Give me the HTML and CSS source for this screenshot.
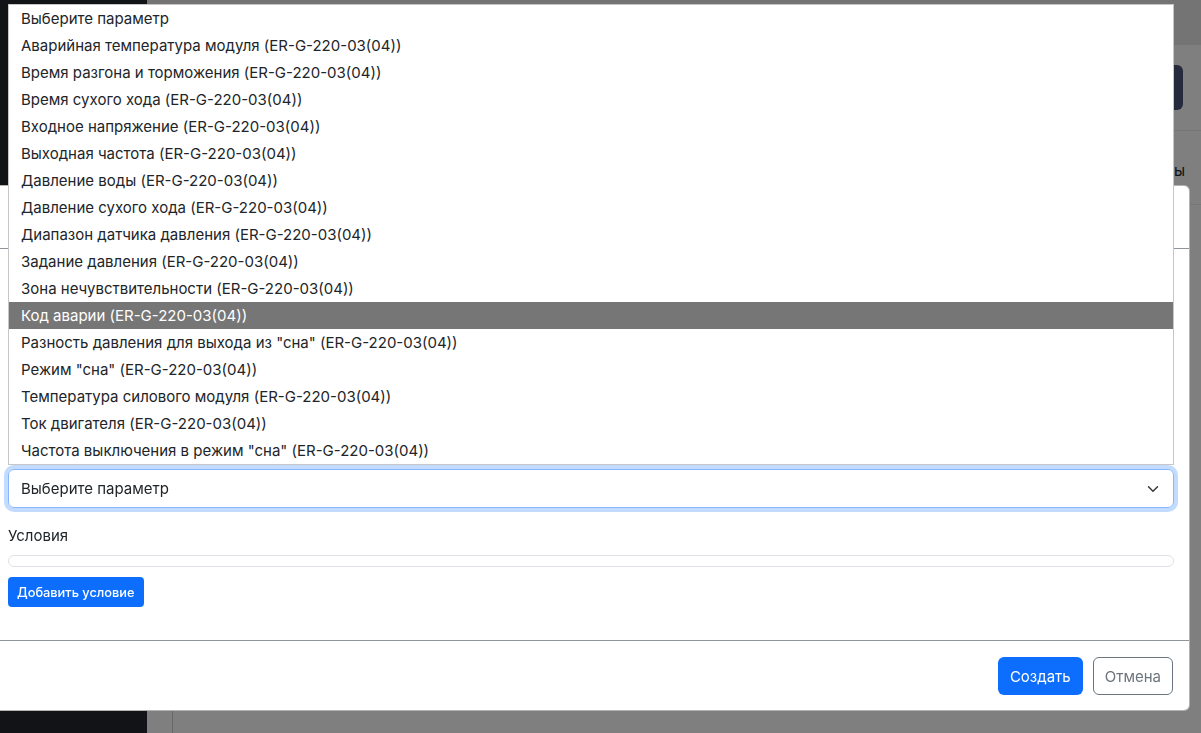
FILE: index.html
```html
<!DOCTYPE html>
<html lang="ru">
<head>
    <meta charset="UTF-8">
    <meta name="viewport" content="width=device-width, initial-scale=1.0">
    <title>Правила - Новое правило</title>
    <link rel="stylesheet" href="styles.css">
</head>
<body>
    <div class="page">
        <aside class="sidebar"></aside>
        <main class="main">
            <header class="topbar"></header>
            <div class="toolbar">
                <div class="btn-dark"></div>
            </div>
            <div class="tabs">
                <span class="tab">ы</span>
            </div>
            <div class="content-panel"></div>
        </main>
    </div>

    <div class="backdrop"></div>

    <div class="modal">
        <div class="modal-header"></div>
        <div class="modal-body">
            <!-- fields hidden under the open select list -->
            <div class="form-group">
                <div class="label-space"></div>
                <div class="form-control"></div>
            </div>
            <div class="form-group">
                <div class="label-space"></div>
                <div class="form-control"></div>
            </div>
            <div class="form-group">
                <div class="label-space"></div>
                <div class="form-select focused">
                    <span>Выберите параметр</span>
                    <svg width="16" height="12" viewBox="0 0 16 16"><path d="m2 5 6 6 6-6" fill="none" stroke="#343a40" stroke-width="2" stroke-linecap="round" stroke-linejoin="round"/></svg>
                </div>
            </div>
            <label class="form-label">Условия</label>
            <div class="conditions"></div>
            <button class="btn btn-primary btn-sm">Добавить условие</button>
        </div>
        <div class="modal-footer">
            <button class="btn btn-primary">Создать</button>
            <button class="btn btn-outline">Отмена</button>
        </div>
    </div>

    <ul class="select-list" id="paramList"></ul>

    <script>
        // Options of the open parameter select
        const params = [
            'Выберите параметр',
            'Аварийная температура модуля',
            'Время разгона и торможения',
            'Время сухого хода',
            'Входное напряжение',
            'Выходная частота',
            'Давление воды',
            'Давление сухого хода',
            'Диапазон датчика давления',
            'Задание давления',
            'Зона нечувствительности',
            'Код аварии',
            'Разность давления для выхода из "сна"',
            'Режим "сна"',
            'Температура силового модуля',
            'Ток двигателя',
            'Частота выключения в режим "сна"'
        ];
        const device = 'ER-G-220-03(04)';
        const selected = 'Код аварии';

        document.getElementById('paramList').innerHTML = params.map((name, i) => {
            const label = i === 0 ? name : `${name} (${device})`;
            const cls = name === selected ? 'option active' : 'option';
            return `<li class="${cls}">${label}</li>`;
        }).join('');
    </script>
</body>
</html>
```

FILE: styles.css
```css
body {
    margin: 0;
    font-family: Inter, "Noto Sans", sans-serif;
    font-size: 15px;
    color: #212529;
    background: #ffffff;
    overflow: hidden;
}
.page {
    display: flex;
    height: 733px;
}
.sidebar {
    width: 147px;
    background: #23262f;
    flex-shrink: 0;
}
.main {
    flex: 1;
    display: flex;
    flex-direction: column;
}
.topbar {
    height: 45px;
    background: #e8e8e8;
}
.toolbar {
    display: flex;
    justify-content: flex-end;
    padding: 20px 18px 0 0;
    box-sizing: border-box;
    height: 86px;
    border-bottom: 1px solid #ececec;
}
.btn-dark {
    width: 120px;
    height: 45px;
    border-radius: 6px;
    background: #4b5578;
}
.tabs {
    display: flex;
    justify-content: flex-end;
    padding: 30px 16px 0 0;
    height: 74px;
    box-sizing: border-box;
    border-bottom: 1px solid #ececec;
}
.content-panel {
    flex: 1;
    margin-left: 25px;
    border-left: 1px solid #cfcfcf;
}
.backdrop {
    position: fixed;
    inset: 0;
    background: rgba(0, 0, 0, 0.5);
}
.modal {
    position: absolute;
    top: 185px;
    left: -8px;
    width: 1198px;
    box-sizing: border-box;
    background: #ffffff;
    border: 1px solid rgba(0, 0, 0, 0.3);
    border-radius: 6px;
}
.modal-header {
    height: 63px;
    box-sizing: border-box;
    border-bottom: 1px solid #8e959c;
}
.modal-body {
    padding: 16px 15px 33px;
}
.form-group {
    margin-bottom: 16px;
}
.label-space {
    height: 24px;
    margin-bottom: 8px;
}
.form-label {
    display: block;
    line-height: 24px;
    margin-bottom: 7px;
    color: #212529;
}
.form-control {
    height: 38px;
    box-sizing: border-box;
    border: 1px solid #dee2e6;
    border-radius: 6px;
}
.form-select {
    height: 39px;
    box-sizing: border-box;
    border: 1px solid #dee2e6;
    border-radius: 6px;
    padding: 0 12px;
    display: flex;
    align-items: center;
    justify-content: space-between;
}
.form-select span {
    margin-top: -1px;
}
.form-select.focused {
    border-color: #86b7fe;
    box-shadow: 0 0 0 4px rgba(13, 110, 253, 0.25);
}
.conditions {
    height: 10px;
    border: 1px solid #dee2e6;
    border-radius: 6px;
    margin-bottom: 10px;
}
.btn {
    font-family: inherit;
    font-size: 15px;
    height: 38px;
    padding: 0 11px;
    border-radius: 6px;
    border: 1px solid transparent;
    cursor: pointer;
}
.btn-primary {
    background: #0d6efd;
    color: #ffffff;
}
.btn-sm {
    display: block;
    height: 30px;
    padding: 0 8px;
    font-size: 12.8px;
    font-weight: 500;
    border-radius: 4px;
}
.btn-outline {
    background: #ffffff;
    border-color: #6c757d;
    color: #6c757d;
}
.modal-footer {
    display: flex;
    justify-content: flex-end;
    gap: 10px;
    padding: 16px 16px 15px;
    border-top: 1px solid #8e959c;
}
.select-list {
    position: absolute;
    top: 4px;
    left: 8px;
    width: 1166px;
    box-sizing: border-box;
    margin: 0;
    padding: 0;
    list-style: none;
    background: #ffffff;
    border: 1px solid #c6c6c6;
}
.option {
    height: 27px;
    line-height: 27px;
    padding-left: 12px;
    color: #212529;
    white-space: nowrap;
}
.option.active {
    background: #767676;
    color: #ffffff;
}
```
